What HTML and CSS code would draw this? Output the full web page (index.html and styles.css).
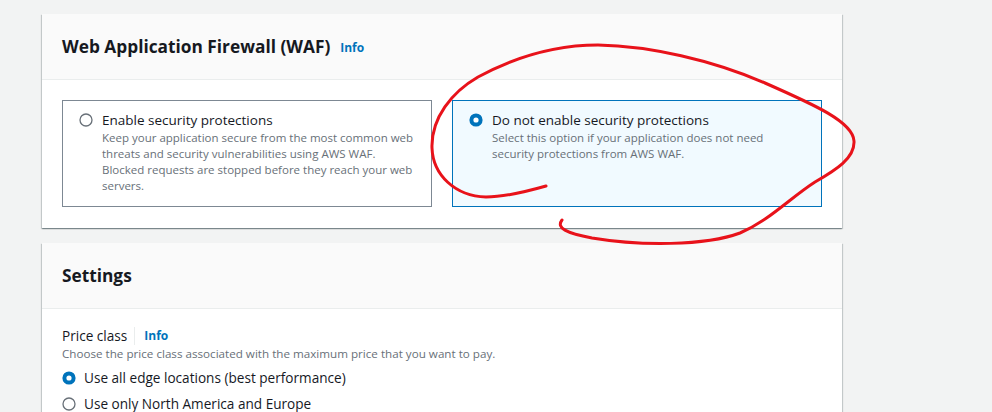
FILE: index.html
```html
<!DOCTYPE html>
<html lang="en">
<head>
<meta charset="utf-8">
<title>CloudFront settings</title>
<link rel="stylesheet" href="styles.css">
</head>
<body>
<main class="page">
  <section class="card">
    <header class="card-header">
      <h2 class="card-title">Web Application Firewall (WAF)</h2>
      <a class="info" href="#">Info</a>
    </header>
    <div class="card-body">
      <div class="tiles">
        <label class="tile">
          <svg class="radio" viewBox="0 0 14 14" width="14" height="14"><circle cx="7" cy="7" r="6" fill="#fff" stroke="#687078" stroke-width="1.3"/></svg>
          <span class="tile-text">
            <span class="tile-label">Enable security protections</span>
            <span class="tile-desc">Keep your application secure from the most common web threats and security vulnerabilities using AWS WAF. Blocked requests are stopped before they reach your web servers.</span>
          </span>
        </label>
        <label class="tile tile-selected">
          <svg class="radio" viewBox="0 0 14 14" width="14" height="14"><circle cx="7" cy="7" r="4.6" fill="#fff" stroke="#0073bb" stroke-width="4"/></svg>
          <span class="tile-text">
            <span class="tile-label">Do not enable security protections</span>
            <span class="tile-desc">Select this option if your application does not need security protections from AWS WAF.</span>
          </span>
        </label>
      </div>
    </div>
  </section>

  <section class="card card-settings">
    <header class="card-header">
      <h2 class="card-title">Settings</h2>
    </header>
    <div class="card-body settings-body">
      <div class="field-label">
        <span>Price class</span>
        <span class="divider"></span>
        <a class="info" href="#">Info</a>
      </div>
      <div class="field-desc">Choose the price class associated with the maximum price that you want to pay.</div>
      <div class="options">
        <label class="option">
          <svg class="radio" viewBox="0 0 14 14" width="14" height="14"><circle cx="7" cy="7" r="4.6" fill="#fff" stroke="#0073bb" stroke-width="4"/></svg>
          <span>Use all edge locations (best performance)</span>
        </label>
        <label class="option">
          <svg class="radio" viewBox="0 0 14 14" width="14" height="14"><circle cx="7" cy="7" r="6" fill="#fff" stroke="#687078" stroke-width="1.3"/></svg>
          <span>Use only North America and Europe</span>
        </label>
      </div>
    </div>
  </section>
</main>

<svg class="scribble" width="992" height="412" viewBox="0 0 992 412" aria-hidden="true">
  <path d="M 546 186 C 525 192, 505 197, 486 197 C 455 196, 433 175, 432 148 C 431 118, 452 92, 478 77 C 515 57, 555 45, 598 45 C 650 46, 712 60, 765 83 C 815 105, 853 122, 854 141 C 855 158, 836 170, 815 182 C 790 198, 770 220, 740 233 C 705 246, 640 246, 592 238 C 566 233, 556 228, 562 220" fill="none" stroke="#e8121a" stroke-width="3" stroke-linecap="round" stroke-linejoin="round"/>
</svg>
</body>
</html>
```

FILE: styles.css
```css
* { box-sizing: border-box; }

html, body {
  margin: 0;
  padding: 0;
  background: #f2f3f3;
  font-family: "Open Sans", "Noto Sans", Arial, sans-serif;
  color: #16191f;
  overflow: hidden;
}

.page {
  padding: 14px 0 0 42px;
  display: flex;
  flex-direction: column;
  gap: 15px;
  width: 842px;
}

.card {
  width: 800px;
  background: #fff;
  box-shadow: 0 1px 1px 0 rgba(0, 28, 36, 0.3), 1px 1px 1px 0 rgba(0, 28, 36, 0.15), -1px 1px 1px 0 rgba(0, 28, 36, 0.15);
}

.card-header {
  height: 66px;
  background: #fafafa;
  border-bottom: 1px solid #eaeded;
  padding: 0 20px;
  display: flex;
  align-items: center;
  gap: 10px;
}

.card-title {
  margin: 0;
  font-size: 17.3px;
  font-weight: 700;
  line-height: 22px;
}

.info {
  color: #0073bb;
  font-size: 12px;
  font-weight: 700;
  text-decoration: none;
  line-height: 16px;
  margin-top: 2px;
}

.card-body {
  padding: 20px 20px 21px;
}

.tiles {
  display: flex;
  gap: 20px;
}

.tile {
  flex: 1;
  height: 107px;
  border: 1px solid #7d8893;
  padding: 9px 16px 12px 16px;
  display: flex;
  align-items: flex-start;
  gap: 9px;
}

.tile-selected {
  border-color: #0073bb;
  background: #f1faff;
}

.radio {
  flex: none;
  margin-top: 3px;
}

.tile-text {
  display: flex;
  flex-direction: column;
}

.tile-label {
  font-size: 13.5px;
  line-height: 20px;
}

.tile-desc {
  font-size: 11.5px;
  line-height: 16px;
  color: #687078;
}

.settings-body {
  padding-top: 17px;
}

.field-label {
  display: flex;
  align-items: center;
  font-size: 13.6px;
  line-height: 20px;
}

.divider {
  width: 1px;
  height: 18px;
  background: #eaeded;
  margin: 0 9px 0 7px;
}

.field-label .info {
  margin-top: 0;
}

.field-desc {
  font-size: 11.65px;
  line-height: 16px;
  color: #687078;
}

.options {
  display: flex;
  flex-direction: column;
  gap: 6px;
  margin-top: 6px;
}

.option {
  display: flex;
  align-items: flex-start;
  gap: 8px;
  font-size: 13.6px;
  line-height: 20px;
}

.scribble {
  position: absolute;
  left: 0;
  top: 0;
  pointer-events: none;
}
```
